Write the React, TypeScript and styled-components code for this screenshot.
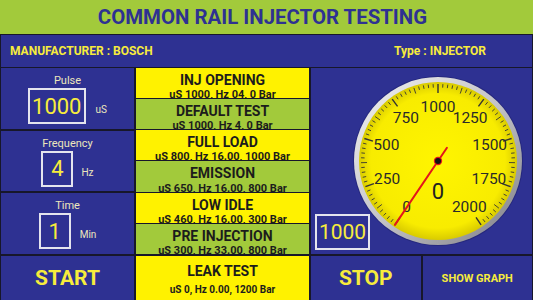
import React from "react"
import styled, { createGlobalStyle } from "styled-components"

const BLUE = "#2e3192"
const YELLOW = "#fff200"
const GREEN = "#a2ca3b"
const TEXT_YELLOW = "#f7ec3c"
const CREAM = "#ece6bc"
const LINE = "#17172a"

const GlobalStyle = createGlobalStyle`
  html, body {
    margin: 0;
    padding: 0;
  }
  body {
    font-family: Roboto, "Liberation Sans", sans-serif;
    background: ${LINE};
  }
`

const Screen = styled.div`
  width: 533px;
  height: 300px;
  display: flex;
  flex-direction: column;
  background: ${LINE};
  overflow: hidden;
`

const TitleBar = styled.div`
  height: 34px;
  flex: 0 0 34px;
  background: ${GREEN};
  display: flex;
  align-items: center;
  justify-content: center;
  padding-right: 8px;

  h1 {
    margin: 0;
    font-size: 20.4px;
    font-weight: 700;
    color: ${BLUE};
  }
`

const Header = styled.div`
  height: 32px;
  flex: 0 0 32px;
  margin: 1px 1px 1px;
  background: ${BLUE};
  display: flex;
  align-items: center;
  justify-content: space-between;
  padding: 0 46px 0 9px;
  font-size: 12px;
  font-weight: 700;
  color: ${TEXT_YELLOW};
`

const Main = styled.div`
  flex: 1;
  margin: 0 1px;
  display: grid;
  grid-template-columns: 133px 173px 1fr;
  grid-template-rows: 1fr 44px;
  gap: 2px;
`

const LeftStack = styled.div`
  display: grid;
  grid-template-rows: repeat(3, 1fr);
  gap: 2px;
`

const InputCell = styled.div`
  background: ${BLUE};
  display: flex;
  flex-direction: column;
  align-items: center;
  padding-top: 6px;
`

const CellLabel = styled.span`
  font-size: 11px;
  line-height: 13px;
  color: ${CREAM};
`

const InputRow = styled.div<{ $gap: number }>`
  display: flex;
  align-items: flex-end;
  gap: ${(p) => p.$gap}px;
  margin-top: 1px;
`

const ValueBox = styled.div`
  box-sizing: border-box;
  height: 36px;
  min-width: 32px;
  padding: 0 2px;
  border: 2px solid #e4e4ee;
  display: flex;
  align-items: center;
  justify-content: center;
  font-size: 22px;
  color: ${TEXT_YELLOW};
`

const Unit = styled.span`
  font-size: 10px;
  line-height: 12px;
  color: ${CREAM};
  margin-bottom: 8px;
`

const TestList = styled.div`
  display: grid;
  grid-template-rows: repeat(6, 1fr);
  gap: 1px;
`

const TestRow = styled.div<{ $tone: "yellow" | "green"; $tall?: boolean }>`
  background: ${(p) => (p.$tone === "yellow" ? YELLOW : GREEN)};
  display: flex;
  flex-direction: column;
  align-items: center;
  justify-content: ${(p) => (p.$tall ? "flex-start" : "space-between")};
  overflow: hidden;
  padding-top: ${(p) => (p.$tall ? 7 : 4)}px;
  color: #1c1c1c;
`

const TestTitle = styled.span`
  font-size: 14px;
  line-height: 16px;
  font-weight: 700;
`

const TestParams = styled.span<{ $tall?: boolean }>`
  font-size: ${(p) => (p.$tall ? 10 : 11)}px;
  font-weight: 700;
  line-height: ${(p) => (p.$tall ? 12 : 8)}px;
  margin-top: ${(p) => (p.$tall ? 5 : 0)}px;
  margin-bottom: ${(p) => (p.$tall ? 0 : -1)}px;
  white-space: nowrap;
`

const GaugePanel = styled.div`
  background: ${BLUE};
  display: grid;

  & > * {
    grid-area: 1 / 1;
  }
`

const GaugeSvg = styled.svg`
  justify-self: end;
  align-self: center;
  margin-right: 8px;
`

const Readout = styled.div`
  justify-self: start;
  align-self: end;
  margin: 0 0 4px 4px;
  box-sizing: border-box;
  width: 55px;
  height: 36px;
  border: 2px solid #e4e4ee;
  display: flex;
  align-items: center;
  justify-content: center;
  font-size: 21px;
  color: ${TEXT_YELLOW};
`

const ActionButton = styled.div<{ $size: number }>`
  background: ${BLUE};
  display: flex;
  align-items: center;
  justify-content: center;
  font-size: ${(p) => p.$size}px;
  font-weight: 700;
  color: ${TEXT_YELLOW};
`

const RightActions = styled.div`
  display: grid;
  grid-template-columns: 1fr 1fr;
  gap: 2px;
`

const inputs = [
  { label: "Pulse", value: "1000", unit: "uS", gap: 10 },
  { label: "Frequency", value: "4", unit: "Hz", gap: 8 },
  { label: "Time", value: "1", unit: "Min", gap: 9 },
]

const tests: { title: string; params: string; tone: "yellow" | "green" }[] = [
  { title: "INJ OPENING", params: "uS 1000, Hz 04, 0 Bar", tone: "yellow" },
  { title: "DEFAULT TEST", params: "uS 1000, Hz 4, 0 Bar", tone: "green" },
  { title: "FULL LOAD", params: "uS 800, Hz 16.00, 1000 Bar", tone: "yellow" },
  { title: "EMISSION", params: "uS 650, Hz 16.00, 800 Bar", tone: "green" },
  { title: "LOW IDLE", params: "uS 460, Hz 16.00, 300 Bar", tone: "yellow" },
  { title: "PRE INJECTION", params: "uS 300, Hz 33.00, 800 Bar", tone: "green" },
]

// gauge geometry
const C = 86
const SWEEP_START = -146
const SWEEP_END = 146
const MAX = 2000

function polar(r: number, deg: number): [number, number] {
  const rad = (deg * Math.PI) / 180
  return [C + r * Math.sin(rad), C - r * Math.cos(rad)]
}

function angleFor(v: number) {
  return SWEEP_START + (v / MAX) * (SWEEP_END - SWEEP_START)
}

function Gauge({ value }: { value: number }) {
  const ticks = []
  for (let i = 0; i <= 80; i++) {
    const a = SWEEP_START + (i * (SWEEP_END - SWEEP_START)) / 80
    const inner = i % 10 === 0 ? 68 : i % 5 === 0 ? 71 : 73.5
    const [x1, y1] = polar(77, a)
    const [x2, y2] = polar(inner, a)
    ticks.push(
      <line key={i} x1={x1} y1={y1} x2={x2} y2={y2} stroke="#333" strokeWidth={i % 10 === 0 ? 1.4 : 0.9} />
    )
  }

  const labels = []
  for (let v = 0; v <= MAX; v += 250) {
    const [x, y] = polar(v === 0 || v === MAX ? 56 : 54, angleFor(v))
    labels.push(
      <text key={v} x={x} y={y} textAnchor="middle" dominantBaseline="central" fontSize="15.5" fill="#2a2a2a" fontFamily="Roboto, sans-serif">
        {v}
      </text>
    )
  }

  const a = angleFor(value)
  const [tx, ty] = polar(77, a)
  const [bx, by] = polar(-16, a)

  return (
    <GaugeSvg width="172" height="172" viewBox="0 0 172 172">
      <defs>
        <linearGradient id="bezel" x1="0" y1="0" x2="1" y2="1">
          <stop offset="0" stopColor="#f2f2f2" />
          <stop offset="0.5" stopColor="#c4c4c8" />
          <stop offset="1" stopColor="#7c7c84" />
        </linearGradient>
        <radialGradient id="face" cx="0.5" cy="0.5" r="0.5">
          <stop offset="0" stopColor="#fff500" />
          <stop offset="0.85" stopColor="#f8ec00" />
          <stop offset="1" stopColor="#d9cb00" />
        </radialGradient>
      </defs>
      <circle cx={C} cy={C} r="85" fill="#1f2270" opacity="0.6" />
      <circle cx={C} cy={C} r="84" fill="url(#bezel)" />
      <circle cx={C} cy={C} r="79" fill="url(#face)" />
      {ticks}
      {labels}
      <text x={C} y={C + 30} textAnchor="middle" dominantBaseline="central" fontSize="22" fill="#222" fontFamily="Roboto, sans-serif">
        0
      </text>
      <line x1={bx} y1={by} x2={tx} y2={ty} stroke="#e3161b" strokeWidth="2" strokeLinecap="round" />
      <circle cx={C} cy={C} r="4.2" fill="#e3161b" />
      <circle cx={C} cy={C} r="3" fill="#111" />
    </GaugeSvg>
  )
}

export default function App() {
  return (
    <>
      <GlobalStyle />
      <Screen>
        <TitleBar>
          <h1>COMMON RAIL INJECTOR TESTING</h1>
        </TitleBar>
        <Header>
          <span>MANUFACTURER : BOSCH</span>
          <span>Type : INJECTOR</span>
        </Header>
        <Main>
          <LeftStack>
            {inputs.map((item) => (
              <InputCell key={item.label}>
                <CellLabel>{item.label}</CellLabel>
                <InputRow $gap={item.gap}>
                  <ValueBox>{item.value}</ValueBox>
                  <Unit>{item.unit}</Unit>
                </InputRow>
              </InputCell>
            ))}
          </LeftStack>
          <TestList>
            {tests.map((t) => (
              <TestRow key={t.title} $tone={t.tone}>
                <TestTitle>{t.title}</TestTitle>
                <TestParams>{t.params}</TestParams>
              </TestRow>
            ))}
          </TestList>
          <GaugePanel>
            <Gauge value={0} />
            <Readout>1000</Readout>
          </GaugePanel>
          <ActionButton $size={21}>START</ActionButton>
          <TestRow $tone="yellow" $tall>
            <TestTitle>LEAK TEST</TestTitle>
            <TestParams $tall>uS 0, Hz 0.00, 1200 Bar</TestParams>
          </TestRow>
          <RightActions>
            <ActionButton $size={21}>STOP</ActionButton>
            <ActionButton $size={11}>SHOW GRAPH</ActionButton>
          </RightActions>
        </Main>
      </Screen>
    </>
  )
}
